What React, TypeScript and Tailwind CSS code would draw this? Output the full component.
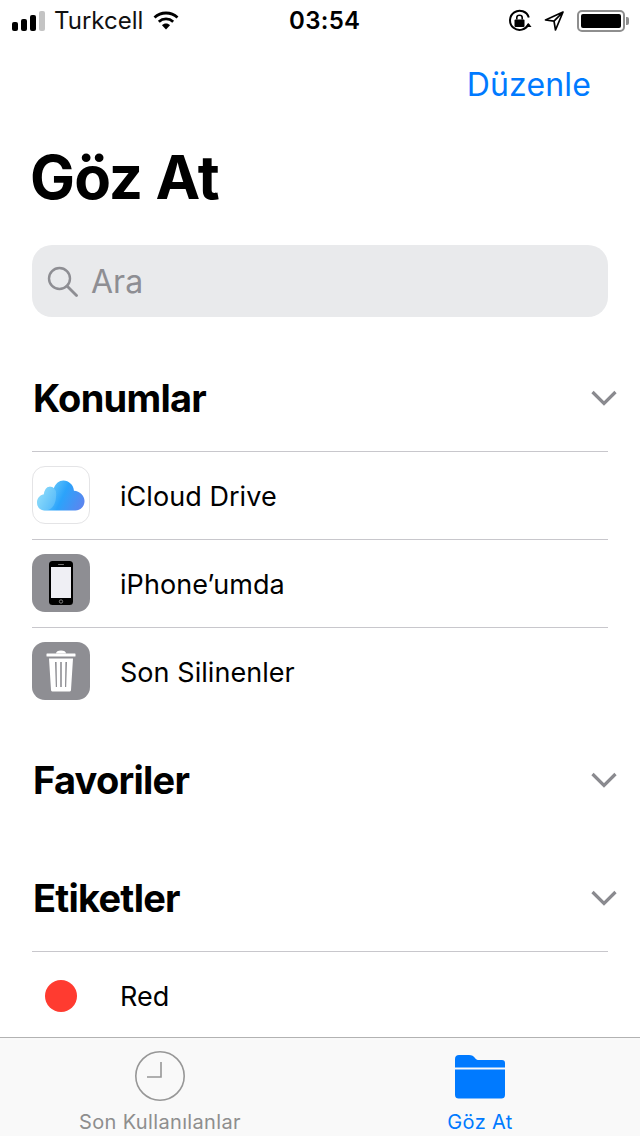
import React from "react";

const Chevron = () => (
  <svg width="28" height="18" viewBox="0 0 28 18" fill="none" className="shrink-0">
    <path d="M2.5 3 L14 14.5 L25.5 3" stroke="#8a8a8f" strokeWidth="3.2" />
  </svg>
);

const SectionHeader = ({ title, className }: { title: string; className: string }) => (
  <div className={`flex items-center justify-between pl-[33px] pr-[22px] ${className}`}>
    <span className="text-[38px] font-bold tracking-[-0.75px] text-black leading-[44px]">{title}</span>
    <Chevron />
  </div>
);

const CloudIcon = () => (
  <div className="w-[58px] h-[58px] rounded-[13px] bg-white border border-[#e4e4e6] flex items-center justify-center shrink-0">
    <svg width="48" height="31" viewBox="0 0 50 32">
      <defs>
        <linearGradient id="cl" x1="0" y1="0.35" x2="1" y2="0.65">
          <stop offset="0" stopColor="#8adcf9" />
          <stop offset="0.55" stopColor="#2ba3fb" />
          <stop offset="1" stopColor="#5a86ef" />
        </linearGradient>
      </defs>
      <path
        d="M8 31.5 C3 31.5 0 27.5 0 23.5 C0 19 3 15.5 7 15 C8 10 10 7 13 7 C15 7 16.5 7.5 17.5 8.5 C19.5 3.5 23 0.5 27.5 0.5 C33 0.5 38 5 38.5 11 C44.5 11.5 49.5 16 49.5 21.8 C49.5 27.5 45.5 31.5 40 31.5 Z"
        fill="url(#cl)"
      />
      <path d="M8 31.5 C3 31.5 0 27.5 0 23.5 C0 19 3 15.5 7 15 C8 10 10 7 13 7 C17 7 20 10 20 14 C20 22 18 31.5 8 31.5 Z" fill="#a6e3fb" opacity="0.3" />
    </svg>
  </div>
);

const PhoneIcon = () => (
  <div className="w-[58px] h-[58px] rounded-[13px] bg-[#8e8e93] flex items-center justify-center shrink-0">
    <svg width="24" height="44" viewBox="0 0 24 44">
      <rect x="0" y="0" width="24" height="44" rx="3.5" fill="#000" />
      <rect x="2" y="6" width="20" height="31" fill="#efeff4" />
      <rect x="9" y="3" width="6" height="1" rx="0.5" fill="#777" />
      <circle cx="12" cy="40.5" r="1.7" fill="none" stroke="#999" strokeWidth="0.8" />
    </svg>
  </div>
);

const TrashIcon = () => (
  <div className="w-[58px] h-[58px] rounded-[13px] bg-[#8e8e93] flex items-center justify-center shrink-0">
    <svg width="30" height="42" viewBox="0 0 30 42" fill="#fff">
      <path d="M10 3.5 C10 1.5 12 0.5 15 0.5 C18 0.5 20 1.5 20 3.5 Z" />
      <rect x="0.5" y="3.5" width="29" height="3" rx="0.5" />
      <path fillRule="evenodd" d="M3 8.5 H27 L25 40 C25 41 24 41.5 23 41.5 H7 C6 41.5 5 41 5 40 Z M9 12 L9.8 37 H11 L10.6 12 Z M14.2 12 V37 H15.8 V12 Z M19.4 12 L19 37 H20.2 L21 12 Z" />
    </svg>
  </div>
);

const Row = ({ icon, label }: { icon: React.ReactNode; label: string }) => (
  <div className="h-[88px] mx-[32px] flex items-center border-t border-[#c8c7cc]">
    <div className="w-[88px] pb-[1px] flex items-center shrink-0">{icon}</div>
    <span className="pt-[2px] text-[27px] tracking-[0.05px] text-black leading-[34px]">{label}</span>
  </div>
);

export default function App() {
  return (
    <div className="relative w-[640px] h-[1136px] bg-white overflow-hidden font-['Inter','Liberation_Sans',sans-serif]">
      {/* status bar */}
      <div className="h-[40px] flex items-center justify-between pl-[12px] pr-[11px] pt-[1px] relative">
        <div className="flex items-center">
          <div className="flex items-end gap-[3px] h-[20px]">
            <span className="w-[6px] h-[9px] rounded-[2px] bg-black" />
            <span className="w-[6px] h-[12px] rounded-[2px] bg-black" />
            <span className="w-[6px] h-[16px] rounded-[2px] bg-black" />
            <span className="w-[6px] h-[20px] rounded-[2px] bg-[#c4c4c4]" />
          </div>
          <span className="ml-[9px] text-[24px] leading-[30px] text-[#111]">Turkcell</span>
          <svg width="26" height="19" viewBox="0 0 26 19" className="ml-[10px]" fill="none">
            <path d="M1.5 6.5 C8 0.5 18 0.5 24.5 6.5" stroke="#000" strokeWidth="2.8" />
            <path d="M5.8 10.8 C10 7 16 7 20.2 10.8" stroke="#000" strokeWidth="2.8" />
            <path d="M9 14.2 L13 18.5 L17 14.2 C15 12 11 12 9 14.2 Z" fill="#000" />
          </svg>
        </div>
        <span className="absolute left-[289px] top-[5px] text-[24px] leading-[32px] font-semibold tracking-[0.3px] text-black">03:54</span>
        <div className="flex items-center">
          <svg width="24" height="24" viewBox="0 0 24 24" fill="none">
            <path d="M20.5 15 A9.6 9.6 0 1 1 20.8 8.5" stroke="#000" strokeWidth="2" />
            <path d="M17.5 8 H23.5 L20.5 12 Z" fill="#000" transform="rotate(180 20.5 13)" />
            <rect x="6.5" y="10.5" width="10" height="7.5" rx="1" fill="#000" />
            <path d="M8.8 10.5 V8.5 C8.8 5.5 14.2 5.5 14.2 8.5 V10.5" stroke="#000" strokeWidth="1.6" />
          </svg>
          <svg width="20" height="20" viewBox="0 0 20 20" className="ml-[12px]" fill="none">
            <path d="M19 1 L1.5 9 L10 10.2 L11.5 19 Z M10 10.2 L19 1" stroke="#000" strokeWidth="1.7" strokeLinejoin="round" />
          </svg>
          <div className="ml-[13px] w-[48px] h-[22px] rounded-[5px] border-2 border-[#8e8e8e] p-[2px]">
            <div className="w-full h-full rounded-[2px] bg-black" />
          </div>
          <div className="w-[3px] h-[8px] rounded-r-[2px] bg-[#8e8e8e] ml-[1px]" />
        </div>
      </div>

      {/* nav */}
      <div className="h-[88px] flex items-start justify-end pr-[49px] pt-[23px]">
        <span className="text-[32px] tracking-[0.15px] leading-[44px] text-[#007aff]">Düzenle</span>
      </div>

      {/* title */}
      <h1 className="pl-[30px] mt-[17px] pb-[1px] text-[60px] leading-[64px] font-bold tracking-[-0.9px] text-black">Göz At</h1>

      {/* search */}
      <div className="mt-[35px] mx-[32px] h-[72px] rounded-[20px] bg-[#e9eaec] flex items-center pl-[15px]">
        <svg width="31" height="31" viewBox="0 0 31 31" fill="none">
          <circle cx="12.5" cy="12.5" r="10.5" stroke="#8e8e93" strokeWidth="2.4" />
          <path d="M20 20 L29.5 29.5" stroke="#8e8e93" strokeWidth="2.8" strokeLinecap="round" />
        </svg>
        <span className="ml-[13px] pt-[1px] text-[32px] leading-[40px] text-[#8e8e93]">Ara</span>
      </div>

      <SectionHeader title="Konumlar" className="mt-[59px]" />
      <div className="mt-[31px]">
        <Row icon={<CloudIcon />} label="iCloud Drive" />
        <Row icon={<PhoneIcon />} label="iPhone’umda" />
        <Row icon={<TrashIcon />} label="Son Silinenler" />
      </div>

      <SectionHeader title="Favoriler" className="mt-[43px]" />
      <SectionHeader title="Etiketler" className="mt-[74px]" />
      <div className="mt-[31px]">
        <Row
          icon={
            <div className="w-[58px] pt-[1px] flex justify-center">
              <span className="w-[32px] h-[32px] rounded-full bg-[#ff3b30]" />
            </div>
          }
          label="Red"
        />
      </div>

      {/* tab bar */}
      <div className="absolute left-0 right-0 bottom-0 h-[99px] bg-[#f9f9f9] border-t border-[#b2b2b2] grid grid-cols-2">
        <div className="flex flex-col items-center pt-[12px]">
          <svg width="52" height="52" viewBox="0 0 52 52" fill="none">
            <circle cx="26" cy="26" r="24.2" stroke="#979797" strokeWidth="1.6" />
            <path d="M27 12 V27 H13" stroke="#979797" strokeWidth="1.6" />
          </svg>
          <span className="mt-[7px] text-[20px] leading-[26px] tracking-[0.35px] text-[#8e8e8e]">Son Kullanılanlar</span>
        </div>
        <div className="flex flex-col items-center pt-[17px]">
          <svg width="50" height="44" viewBox="0 0 50 44" fill="#007aff">
            <path d="M0 14 V4 C0 1.5 1.5 0 4 0 H14 C17 0 18.5 1 20 3 C21 4.5 22 5 24 5 H47 C49 5 50 6 50 8 V12.5 H0 Z" />
            <path d="M0 14.5 H50 V40 C50 42.5 48.5 43.5 46.5 43.5 H3.5 C1.5 43.5 0 42.5 0 40 Z" />
          </svg>
          <span className="mt-[10px] text-[20px] leading-[26px] tracking-[0.35px] text-[#007aff]">Göz At</span>
        </div>
      </div>
    </div>
  );
}
